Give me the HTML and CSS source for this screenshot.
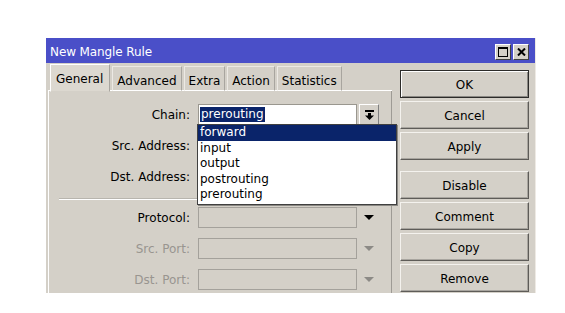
FILE: index.html
```html
<!DOCTYPE html>
<html lang="en">
<head>
  <meta charset="UTF-8">
  <title>New Mangle Rule</title>
  <link rel="stylesheet" href="styles.css">
</head>
<body>
  <div class="window">
    <div class="titlebar">
      <span class="title">New Mangle Rule</span>
      <div class="win-btns">
        <span class="wbtn"><span class="max-box"></span></span>
        <span class="wbtn">
          <svg width="9" height="8" viewBox="0 0 9 8">
            <path d="M1 0.5 L8 7.5 M8 0.5 L1 7.5" stroke="#000" stroke-width="2"/>
          </svg>
        </span>
      </div>
    </div>

    <div class="content">
      <div class="main">
        <div class="tabs">
          <span class="tab active">General</span>
          <span class="tab">Advanced</span>
          <span class="tab">Extra</span>
          <span class="tab">Action</span>
          <span class="tab">Statistics</span>
        </div>

        <div class="panel">
          <div class="row">
            <label>Chain:</label>
            <div class="combo">
              <div class="field"><span class="selected-text">prerouting</span></div>
              <span class="drop-btn">
                <svg width="9" height="10" viewBox="0 0 9 10">
                  <rect x="0" y="0" width="9" height="2" fill="#000"/>
                  <rect x="3" y="3" width="3" height="3" fill="#000"/>
                  <polygon points="0,5.5 9,5.5 4.5,10" fill="#000"/>
                </svg>
              </span>
              <ul class="list">
                <li class="hl">forward</li>
                <li>input</li>
                <li>output</li>
                <li>postrouting</li>
                <li>prerouting</li>
              </ul>
            </div>
          </div>
          <div class="row">
            <label>Src. Address:</label>
            <div class="combo"><div class="field"></div></div>
          </div>
          <div class="row">
            <label>Dst. Address:</label>
            <div class="combo"><div class="field"></div></div>
          </div>

          <div class="separator"></div>

          <div class="row">
            <label>Protocol:</label>
            <div class="combo"><div class="field disabled"></div><span class="tri"></span></div>
          </div>
          <div class="row off">
            <label>Src. Port:</label>
            <div class="combo"><div class="field disabled"></div><span class="tri"></span></div>
          </div>
          <div class="row off">
            <label>Dst. Port:</label>
            <div class="combo"><div class="field disabled"></div><span class="tri"></span></div>
          </div>
        </div>
      </div>

      <div class="buttons">
        <button class="default">OK</button>
        <button>Cancel</button>
        <button>Apply</button>
        <button class="spaced">Disable</button>
        <button>Comment</button>
        <button>Copy</button>
        <button>Remove</button>
      </div>
    </div>
  </div>
</body>
</html>
```

FILE: styles.css
```css
:root {
  --face: #d4d0c8;
  --title: #4a4fc8;
  --select: #0a246a;
  --shadow: #808080;
  --light: #ffffff;
  --dim: #999590;
}

body {
  margin: 0;
  background: #fff;
  font-family: 'DejaVu Sans', Verdana, sans-serif;
  font-size: 12px;
  color: #000;
}

.window {
  width: 490px;
  height: 255px;
  margin: 38px 0 0 46px;
  background: var(--face);
  display: flex;
  flex-direction: column;
  box-sizing: border-box;
  border-right: 1px solid #eeeae4;
}

.titlebar {
  height: 25px;
  background: var(--title);
  color: #fff;
  display: flex;
  align-items: center;
  justify-content: space-between;
  padding: 2px 6px 0 4px;
  box-sizing: border-box;
  flex-shrink: 0;
}

.title {
  letter-spacing: -0.1px;
  padding-top: 1px;
}

.win-btns {
  display: flex;
  gap: 2px;
}

.wbtn {
  width: 14px;
  height: 14px;
  background: var(--face);
  border: 1px solid;
  border-color: var(--light) #404040 #404040 var(--light);
  display: flex;
  align-items: center;
  justify-content: center;
}

.max-box {
  width: 8px;
  height: 7px;
  border: 1px solid #000;
  border-top-width: 2px;
}

.content {
  flex: 1;
  display: flex;
}

.main {
  width: 344px;
  display: flex;
  flex-direction: column;
  padding-left: 2px;
}

.tabs {
  display: flex;
  gap: 2px;
  padding: 1px 0 0 2px;
  height: 28px;
  box-sizing: border-box;
  border-bottom: 1px solid var(--light);
}

.tab {
  padding: 4px 4px 0;
  display: flex;
  align-items: center;
  border: 1px solid;
  border-color: #ece9e4 #a8a59f transparent #ece9e4;
  height: 25px;
  box-sizing: border-box;
  margin-top: 2px;
}

.tab.active {
  padding: 2px 6px 0 5px;
  margin-top: 0;
  height: 28px;
  background: #dcd8d0;
  border-color: var(--light) #a8a59f var(--face) var(--light);
}

.panel {
  flex: 1;
  border-left: 1px solid var(--light);
  border-right: 1px solid #9e9b95;
  padding-top: 13px;
  display: flex;
  flex-direction: column;
}

.row {
  display: flex;
  align-items: center;
  height: 21px;
  margin-bottom: 10px;
}

.row label {
  width: 141px;
  text-align: right;
  padding-right: 8px;
}

.row.off label {
  color: var(--dim);
}

.combo {
  position: relative;
  display: flex;
  align-items: center;
}

.field {
  width: 156px;
  height: 19px;
  background: #fff;
  border: 1px solid #9a978f;
  display: flex;
  align-items: center;
  padding-left: 1px;
}

.field.disabled {
  background: var(--face);
  border-color: #a4a19b;
}

.selected-text {
  background: var(--select);
  color: #fff;
  padding: 0 1px;
  line-height: 15px;
}

.drop-btn {
  width: 20px;
  height: 21px;
  margin-left: 2px;
  box-sizing: border-box;
  border: 1px solid;
  border-color: var(--light) var(--shadow) var(--shadow) var(--light);
  display: flex;
  align-items: center;
  justify-content: center;
}

.tri {
  margin-left: 7px;
  width: 0;
  height: 0;
  border-left: 5px solid transparent;
  border-right: 5px solid transparent;
  border-top: 5px solid #000;
}

.row.off .tri {
  border-top-color: #8c8a86;
}

.list {
  position: absolute;
  top: 20px;
  left: -1px;
  width: 198px;
  margin: 0;
  padding: 0 0 1px;
  list-style: none;
  background: #fff;
  border: 1px solid #404040;
  box-shadow: 1px 1px 0 #8a8883;
  z-index: 2;
}

.list li {
  height: 15.6px;
  line-height: 15px;
  padding-left: 2px;
}

.list li.hl {
  background: var(--select);
  color: #fff;
}

.separator {
  height: 0;
  margin: 1px 0 7px 10px;
  border-top: 1px solid #b8b5ae;
  border-bottom: 1px solid var(--light);
}

.buttons {
  display: flex;
  flex-direction: column;
  gap: 3px;
  padding: 7px 0 0 8px;
}

button {
  width: 129px;
  height: 28px;
  background: var(--face);
  font-family: inherit;
  font-size: 12px;
  color: #000;
  border: 1px solid;
  border-color: #f4f2ee #5e5c58 #5e5c58 #f4f2ee;
  box-shadow: inset -1px -1px 0 #a8a59f;
  padding: 1px 0 0;
}

button.default {
  border: 1px solid #2c2b29;
  box-shadow: inset 1px 1px 0 #fff, inset -1px -1px 0 #8a8883;
}

button.spaced {
  margin-top: 8px;
}
```
